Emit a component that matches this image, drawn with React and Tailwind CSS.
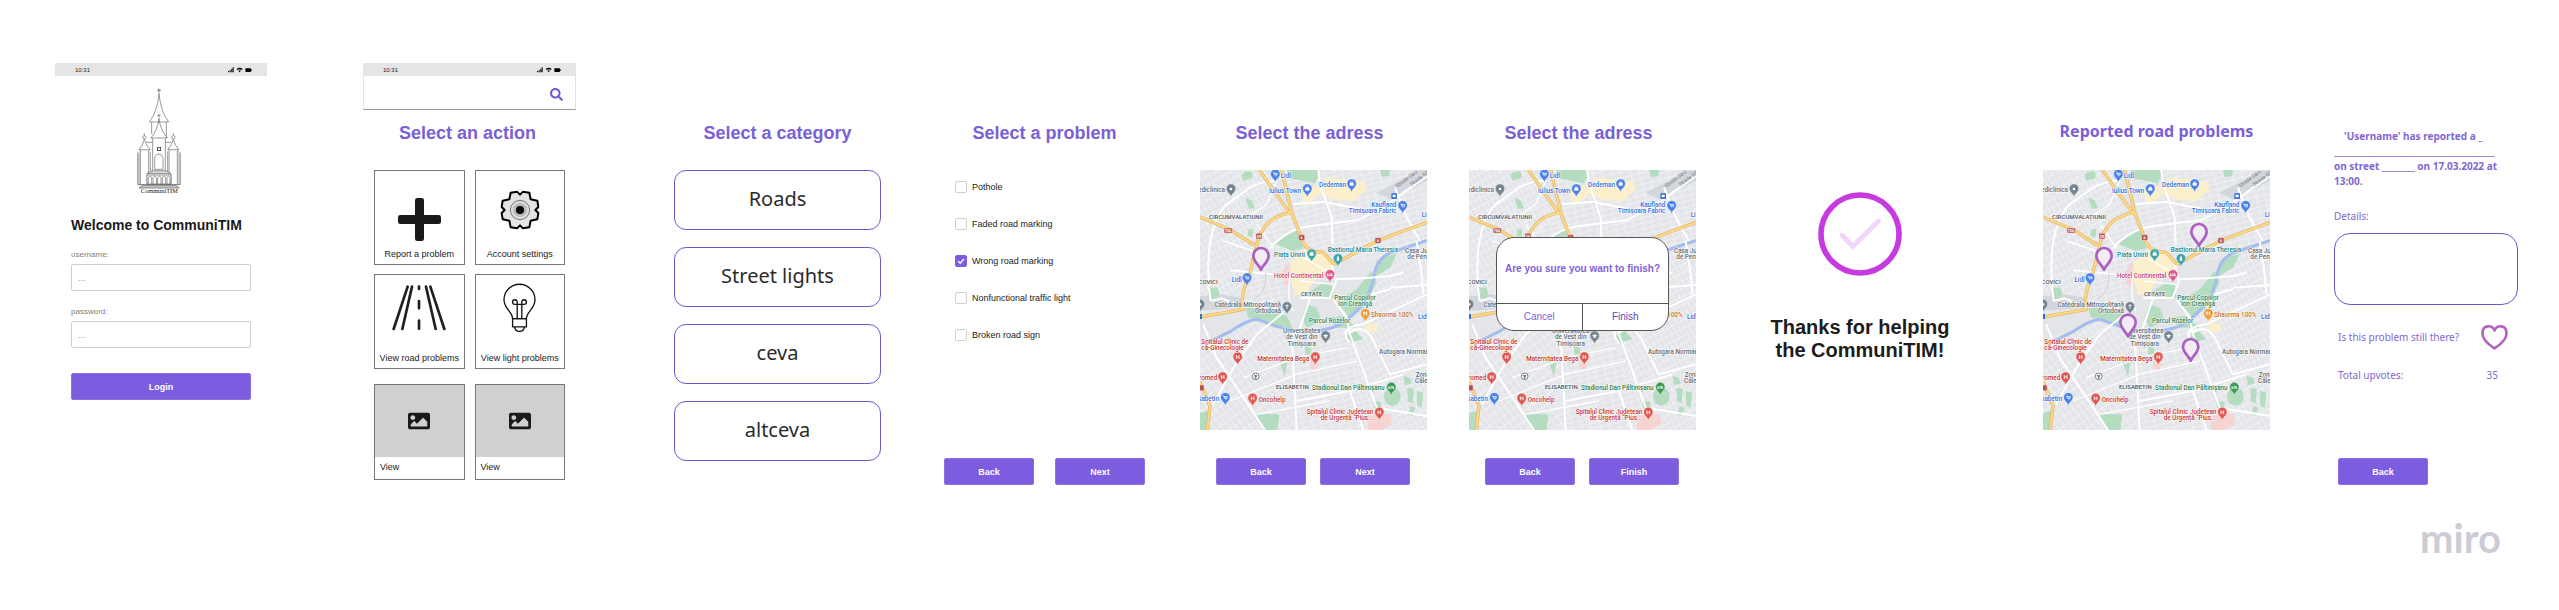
import React from "react";
import { FaSearch, FaImage } from "react-icons/fa";

const PIN_COLORS = {
  blue: "#4a80ea",
  gray: "#74848f",
  teal: "#3aa5b0",
  pink: "#e0588c",
  red: "#e0564f",
  orange: "#f29a2e",
  green: "#3f9a58",
};

const TEXT_COLORS = {
  blue: "#2f6fe0",
  gray: "#5d6a74",
  teal: "#148391",
  pink: "#c73b72",
  red: "#c8322c",
  orange: "#c8701a",
  green: "#2e7d46",
  dark: "#4a4f55",
};

/* [text, x, y, colour, anchor] */
const LABELS = [
  ["Mediclinica", 105, 94, "gray", "end"],
  ["Lidl", 272, 51, "blue", "start"],
  ["Iulius Town", 333, 95, "blue", "end"],
  ["Dedeman", 468, 79, "blue", "end"],
  ["CIRCUMVALAȚIUNII", 57, 174, "dark", "start"],
  ["Kaufland", 619, 137, "blue", "end"],
  ["Timișoara Fabric", 619, 156, "blue", "end"],
  ["Lidl", 695, 168, "blue", "start"],
  ["Piața Unirii", 345, 289, "teal", "end"],
  ["Bastionul Maria Theresia", 413, 273, "teal", "start"],
  ["Casa Județ", 645, 276, "gray", "start"],
  ["de Pensii", 652, 294, "gray", "start"],
  ["Hotel Continental", 400, 352, "pink", "end"],
  ["Lidl", 155, 362, "blue", "end"],
  ["COVICI", 83, 369, "dark", "end"],
  ["CETATE", 365, 406, "dark", "middle"],
  ["Parcul Copiilor", 495, 416, "green", "middle"],
  ["Ion Creangă", 495, 434, "green", "middle"],
  ["Catedrala Mitropolitană", 273, 439, "gray", "end"],
  ["Ortodoxă", 273, 457, "gray", "end"],
  ["Parcul Rozelor", 419, 485, "green", "middle"],
  ["Shaorma 100%", 543, 469, "orange", "start"],
  ["Lidl", 684, 473, "blue", "start"],
  ["Universitatea", 335, 516, "gray", "middle"],
  ["de Vest din", 335, 535, "gray", "middle"],
  ["Timișoara", 335, 554, "gray", "middle"],
  ["Spitalul Clinic de", 34, 550, "red", "start"],
  ["că-Ginecologie", 34, 568, "red", "start"],
  ["Maternitatea Bega", 358, 600, "red", "end"],
  ["Autogara Normandia", 567, 580, "gray", "start"],
  ["Promed", 82, 658, "red", "end"],
  ["Zona", 677, 649, "gray", "start"],
  ["Călea", 675, 667, "gray", "start"],
  ["ELISABETIN", 307, 685, "dark", "middle"],
  ["Stadionul Dan Păltinișanu", 584, 687, "green", "end"],
  ["Elisabetin", 87, 720, "blue", "end"],
  ["Oncohelp", 206, 723, "red", "start"],
  ["Spitalul Clinic Județean", 550, 758, "red", "end"],
  ["de Urgență “Pius...", 550, 776, "red", "end"],
];

/* [x, y, colour, glyph] */
const PINS = [
  [123, 84, "gray", "dot"],
  [256, 40, "blue", "cart"],
  [352, 84, "blue", "bag"],
  [485, 69, "blue", "bag"],
  [638, 134, "blue", "cart"],
  [365, 279, "teal", "bag"],
  [444, 293, "teal", "tower"],
  [420, 341, "pink", "bed"],
  [171, 351, "blue", "cart"],
  [291, 437, "gray", "cross"],
  [526, 458, "orange", "fork"],
  [30, 430, "gray", "dot"],
  [407, 525, "gray", "cap"],
  [143, 588, "red", "H"],
  [376, 588, "red", "H"],
  [98, 648, "red", "H"],
  [604, 679, "green", "bed"],
  [106, 710, "blue", "cart"],
  [188, 712, "red", "H"],
  [568, 754, "red", "H"],
];

function Glyph({ kind }) {
  const line = { fill: "none", stroke: "#fff", strokeWidth: 2.5 };
  switch (kind) {
    case "H":
      return <path d="M-4-6V6M4-6V6M-4 0H4" {...line} />;
    case "cart":
      return <path d="M-7-5H-4L-2 2H5L6-3H-3M-1 5H0M4 5H5" {...line} />;
    case "bag":
      return (
        <g>
          <rect x="-6" y="-3" width="12" height="8" fill="#fff" />
          <path d="M-3-3V-6H3V-3" {...line} />
        </g>
      );
    case "tower":
      return <path d="M-2-7H2L4 6H-4Z" fill="#fff" />;
    case "bed":
      return <path d="M-7-4V5M-7 2H7V5M-2-2H6V2" {...line} />;
    case "cross":
      return <path d="M0-7V7M-5-3H5" {...line} />;
    case "fork":
      return <path d="M-4-6V6M-6-6V-1H-2V-6M4 6V-6Q1-3 2 1H4" {...line} />;
    case "cap":
      return <path d="M-8-1L0-5L8-1L0 3ZM-4 2V5H4V2" fill="#fff" />;
    default:
      return <circle r="4" fill="#fff" />;
  }
}

function CityMap({ markers = [], id }) {
  const a = `${id}-streets-a`;
  const b = `${id}-streets-b`;
  const c = `${id}-streets-c`;
  return (
    <svg viewBox="30 27 681 780" className="block w-full" role="img" aria-label="Map of Timișoara">
      <defs>
        <pattern id={a} width="30" height="21" patternUnits="userSpaceOnUse" patternTransform="rotate(-28)">
          <path d="M0 2H30M3 0V21M18 2V21" stroke="#f7f8f9" strokeWidth="2" fill="none" />
        </pattern>
        <pattern id={b} width="27" height="33" patternUnits="userSpaceOnUse" patternTransform="rotate(-14)">
          <path d="M0 2H27M3 0V33M3 18H27" stroke="#f7f8f9" strokeWidth="2" fill="none" />
        </pattern>
        <pattern id={c} width="36" height="24" patternUnits="userSpaceOnUse" patternTransform="rotate(-36)">
          <path d="M0 2H36M3 0V24M21 2V24" stroke="#f7f8f9" strokeWidth="2" fill="none" />
        </pattern>
      </defs>
      <rect x="30" y="27" width="681" height="780" fill="#e3e5e9" />
      <path d="M30 27H230L300 158L200 250L160 445L30 470Z" fill={`url(#${a})`} />
      <path d="M300 158L275 27H711V240L560 300L430 300L340 250Z" fill={`url(#${b})`} />
      <path d="M230 190L300 160L345 250L300 340L280 440L160 440Z" fill={`url(#${b})`} />
      <path d="M30 540L190 480L300 520L310 807H30Z" fill={`url(#${c})`} />
      <path d="M310 520L470 500L560 807H310Z" fill={`url(#${b})`} />
      <path d="M470 510L575 300L711 250V807H560Z" fill={`url(#${a})`} />

      <g fill="#d3d6dc">
        <path d="M560 95L690 27H711V60L600 115Z" />
        <path d="M30 405L95 400L160 412L158 440L30 450Z" />
      </g>
      <g fill="#fbf0cb">
        <path d="M330 85L400 70L412 50L525 62L530 85L490 120L440 118L390 100L345 135Z" />
        <path d="M305 300L350 260L400 280L435 310L425 340L370 360L355 390L315 405L300 350Z" />
        <path d="M525 485L565 490L560 510L530 515Z" />
      </g>
      <g fill="#b4dcbf">
        <path d="M290 27H383V50L375 67L300 52Z" />
        <path d="M155 40Q170 25 187 35L188 50L160 60Z" />
        <path d="M570 27H600L598 45L575 48Z" />
        <path d="M165 110L185 118L195 140L178 145ZM175 205L190 205L188 227L172 225Z" />
        <path d="M255 250L300 212L328 207L340 262L310 270Z" />
        <circle cx="71" cy="396" r="16" />
        <path d="M58 380H84V412H58Z" />
        <path d="M345 400L400 365L425 370L430 410L380 415Z" />
        <path d="M440 420L500 385L545 330L560 365L520 440L480 470L455 440Z" />
        <path d="M560 300L590 285L620 280L600 320L560 345L548 375Z" />
        <path d="M165 440L250 445L290 465L310 505L265 500L215 475L175 470Z" />
        <path d="M350 430L380 440L395 480L350 500L335 470Z" />
        <path d="M410 470L460 465L500 500L440 500Z" />
        <path d="M470 525L495 508L520 535L480 545Z" />
        <path d="M265 595L292 605L285 645Z" />
        <path d="M345 555L365 562L360 590L345 585Z" />
        <ellipse cx="607" cy="706" rx="25" ry="28" />
        <path d="M640 645L660 650L665 668L645 672ZM652 680L672 684L668 726L654 722ZM680 690L700 695L695 740L682 735ZM662 735L676 740L668 765L655 760Z" />
        <path d="M30 755L55 750L48 807H30ZM198 760H268L262 807H225Z" />
        <path d="M550 720L575 722L572 745L552 742Z" />
      </g>
      <g fill="#f6d4d2">
        <path d="M530 765L600 758L608 790L570 807H535Z" />
        <path d="M360 600L385 610L380 630L362 622Z" />
        <path d="M278 330L298 300L300 380L280 370Z" />
      </g>

      <path
        d="M66 538L120 512Q180 472 205 476L262 497L330 512Q410 512 450 490Q500 458 530 412Q550 370 553 335Q565 290 600 276L711 238"
        fill="none"
        stroke="#a4bdee"
        strokeWidth="9"
      />

      <g fill="none" stroke="#fff" strokeWidth="6">
        <path d="M62 420Q50 350 58 260Q70 170 110 130L180 80Q230 55 262 60" />
        <path d="M62 420L95 412L160 440" />
        <path d="M385 27Q390 80 405 110L425 170L428 250" />
        <path d="M240 262Q290 205 360 195L500 178Q570 150 640 95L711 45" />
        <path d="M310 130L400 122L540 150" />
        <path d="M615 80L650 170L690 240" />
        <path d="M120 328L200 335L300 345" />
        <path d="M436 355L520 352L600 345L640 335" />
        <path d="M425 310L438 360L420 410L330 412" />
        <path d="M430 415L470 470L480 520L560 740" />
        <path d="M360 412L330 500L305 530L320 807" />
        <path d="M40 490L80 590L130 665L225 807" />
        <path d="M280 455L200 520L130 620L70 730" />
        <path d="M480 545Q440 500 520 490L711 400" />
        <path d="M480 515Q530 480 560 560L600 640L711 610" />
        <path d="M320 720L480 690L640 640" />
        <path d="M560 740L711 765M480 690L520 807" />
        <path d="M600 380L711 372M545 400L600 385" />
        <path d="M680 240L695 340L700 400" />
      </g>
      <g fill="none" stroke="#fff" strokeWidth="4">
        <path d="M200 190L250 260M260 60L230 130L170 170M100 240L190 270" />
        <path d="M300 345Q290 420 310 450M340 290L430 340M330 360L430 370" />
        <path d="M160 650L320 590L470 560M120 720L320 640L500 600M200 760L420 720" />
      </g>
      <path d="M228 335Q230 400 190 415" fill="none" stroke="#cfd2d8" strokeWidth="3" />

      <g fill="none" strokeLinejoin="round">
        <g stroke="#e5b45c" strokeWidth="10">
          <path d="M30 168L120 206L193 252" />
          <path d="M208 27L300 158M275 27L306 158L340 245Q352 272 400 275L432 310" />
          <path d="M306 155Q225 165 203 240L180 335Q148 410 160 445L30 468" />
          <path d="M432 310L560 240L711 184" />
          <path d="M30 662L60 735L52 807" />
        </g>
        <g stroke="#fbd98b" strokeWidth="6">
          <path d="M30 168L120 206L193 252" />
          <path d="M208 27L300 158M275 27L306 158L340 245Q352 272 400 275L432 310" />
          <path d="M306 155Q225 165 203 240L180 335Q148 410 160 445L30 468" />
          <path d="M432 310L560 240L711 184" />
          <path d="M30 662L60 735L52 807" />
        </g>
      </g>

      <g fill="#b9524e" stroke="#f3d9cf" strokeWidth="1.5">
        <rect x="102" y="201" width="25" height="15" rx="3" />
        <rect x="198" y="217" width="18" height="17" rx="3" />
        <rect x="326" y="221" width="18" height="17" rx="3" />
        <rect x="555" y="230" width="18" height="17" rx="3" />
        <rect x="24" y="672" width="18" height="17" rx="3" />
      </g>
      <g className="font-['Roboto',sans-serif]" fontSize="11" fontWeight="700" fill="#fff" textAnchor="middle">
        <text x="114" y="213">70A</text>
        <text x="207" y="230">59</text>
        <text x="335" y="234">6</text>
        <text x="564" y="243">6</text>
      </g>
      <rect x="604" y="97" width="17" height="17" rx="2" fill="#2f6fd6" />
      <rect x="608" y="101" width="9" height="8" rx="2" fill="#fff" />
      <rect x="22" y="459" width="14" height="15" fill="#2f6fd6" />

      <g className="font-['Roboto',sans-serif]" fontSize="15" fill="#6c7278">
        <text transform="translate(622 80) rotate(-36)">Strada Gării</text>
        <text transform="translate(664 76) rotate(-36)">Strada Gării</text>
      </g>

      <circle cx="197" cy="646" r="10" fill="#fff" stroke="#777d83" strokeWidth="3" />
      <path d="M192 642H202L197 656Z" fill="#777d83" />

      {PINS.map(([x, y, color, glyph]) => (
        <g key={`${x}-${y}`} transform={`translate(${x} ${y})`}>
          <path
            d="M0 24C-2 14-14 9-14-1A14 14 0 1 1 14-1C14 9 2 14 0 24Z"
            fill={PIN_COLORS[color]}
            stroke="#fff"
            strokeWidth="1"
          />
          <Glyph kind={glyph} />
        </g>
      ))}

      <g
        className="font-['Roboto',sans-serif]"
        fontWeight="500"
        stroke="#fff"
        strokeWidth="3"
        strokeLinejoin="round"
        paintOrder="stroke"
      >
        {LABELS.map(([text, x, y, color, anchor]) => (
          <text
            key={`${text}-${x}-${y}`}
            x={x}
            y={y}
            fill={TEXT_COLORS[color]}
            textAnchor={anchor}
            fontSize={color === "dark" ? 18 : 19}
          >
            {text}
          </text>
        ))}
      </g>

      {markers.map(([x, y]) => (
        <path
          key={`${x}-${y}`}
          transform={`translate(${x} ${y})`}
          d="M0 41C-6 26-23 17-23-1A23 23 0 1 1 23-1C23 17 6 26 0 41Z"
          fill="#f1ecf5"
          stroke="#ab5fc0"
          strokeWidth="8"
          strokeLinejoin="round"
        />
      ))}
    </svg>
  );
}

function StatusBar() {
  return (
    <div className="flex h-[13px] items-center justify-between bg-[#e5e5e5] pr-[15px] pl-5">
      <span className="text-[6px] leading-[8px] text-[#222]">10:31</span>
      <svg viewBox="0 0 72 18" className="h-[6px] w-6" aria-hidden="true">
        <path d="M0 16V12H3V16ZM5 16V9H8V16ZM10 16V5H13V16ZM14 16V1H17V16Z" fill="#000" />
        <path d="M26 6Q35-1 44 6L41 9Q35 5 29 9ZM31 11Q35 8 39 11L35 16Z" fill="#000" />
        <rect x="52" y="4" width="17" height="11" rx="2" fill="#000" />
        <rect x="70" y="7" width="2" height="5" fill="#000" />
      </svg>
    </div>
  );
}

function CathedralLogo() {
  return (
    <svg
      viewBox="255 87 138 321"
      className="mx-auto h-[107px] w-[46px]"
      fill="none"
      stroke="#666"
      strokeWidth="2"
      role="img"
      aria-label="CommuniTIM"
    >
      <path d="M324 90V108M318 95H330M320 91H328" />
      <path d="M324 106Q318 160 295 189H353Q330 160 324 106Z" />
      <path d="M302 190V225M346 190V236" />
      <path d="M324 165V182M319 169H329" />
      <path d="M324 180Q319 215 300 237H349Q329 215 324 180Z" />
      <path d="M305 238V340M343 238V340" />
      <rect x="319" y="265" width="10" height="10" stroke="#222" />
      <path d="M311 331V298Q311 287 324 285Q336 287 336 298V331Z" />
      <path d="M280 223V230M367 223V230" />
      <circle cx="280" cy="235" r="5" />
      <circle cx="367" cy="235" r="5" />
      <path d="M280 241Q276 260 264 272H298Q285 260 280 241ZM367 241Q362 260 350 272H384Q371 260 367 241Z" />
      <path d="M286 250H304M344 250H361" />
      <path d="M268 273V376M293 273V344M354 273V344M379 273V376" />
      <path d="M260 376V283L266 278M264 376V284M388 376V283L381 278M384 376V284M298 278V340M350 278V340" />
      <path d="M288 344L304 335H345L360 344ZM288 344V375M360 344V375" fill="#d5d5d5" />
      <path d="M288 348H360V375H288Z" fill="#fff" />
      <path d="M292 375V356Q297 346 302 356V375M306 375V356Q311 346 316 356V375M320 375V356Q325 346 330 356V375M334 375V356Q339 346 344 356V375M348 375V356Q353 346 357 356V375" />
      <path d="M260 377H388" stroke="#333" />
      <path d="M274 379H374L385 387H264Z" fill="#c4c4c4" />
      <text
        x="325"
        y="403"
        textAnchor="middle"
        fontSize="19"
        fill="#111"
        stroke="none"
        className="font-['Liberation_Serif',serif]"
      >
        CommuniTIM
      </text>
    </svg>
  );
}

function GearIcon() {
  return (
    <svg viewBox="0 0 120 120" className="size-10" aria-hidden="true">
      <path
        d="M60 14L69 5L88 8L92 28L112 32L115 51L106 60L115 69L112 88L92 92L88 112L69 115L60 106L51 115L32 112L28 92L8 88L5 69L14 60L5 51L8 32L28 28L32 8L51 5Z"
        fill="#e4e4e4"
        stroke="#000"
        strokeWidth="6"
        strokeLinejoin="round"
      />
      <circle cx="60" cy="60" r="29" fill="#dcdcdc" stroke="#777" strokeWidth="3" />
      <circle cx="60" cy="60" r="21" fill="#b9b9b9" />
      <circle cx="60" cy="60" r="12" fill="#000" />
    </svg>
  );
}

function PlusIcon() {
  return (
    <svg viewBox="0 0 129 129" className="size-[43px]" aria-hidden="true">
      <rect x="51" y="0" width="27" height="129" rx="7" fill="#1a1a1a" />
      <rect x="0" y="51" width="129" height="27" rx="7" fill="#1a1a1a" />
    </svg>
  );
}

function RoadIcon() {
  return (
    <svg
      viewBox="0 0 162 138"
      className="h-[46px] w-[54px]"
      stroke="#1f1f1f"
      strokeWidth="8"
      strokeLinecap="round"
      aria-hidden="true"
    >
      <path d="M47 5L5 132M60 5L31 132M102 5L131 132M115 5L157 132" />
      <path d="M81 5V12M81 48V70M81 107V131" />
    </svg>
  );
}

function BulbIcon() {
  return (
    <svg
      viewBox="0 0 100 150"
      className="h-[50px] w-[33px]"
      fill="none"
      stroke="#111"
      strokeWidth="4"
      strokeLinejoin="round"
      aria-hidden="true"
    >
      <path d="M29 107C29 86 3 78 3 50A47 47 0 0 1 97 50C97 78 71 86 71 107Z" />
      <path d="M29 107H71V132H29ZM35 132Q37 146 50 146Q63 146 65 132" />
      <path d="M43 107V64M57 107V64M43 64H57" />
      <path d="M43 64H36A7 7 0 1 1 43 57ZM57 64H64A7 7 0 1 0 57 57Z" />
    </svg>
  );
}

function Title({ children, className = "" }) {
  return (
    <h2 className={`text-center text-[18px] leading-6 font-bold whitespace-nowrap text-[#7a60d6] ${className}`}>
      {children}
    </h2>
  );
}

function PrimaryButton({ children, className = "w-[90px]" }) {
  return (
    <button
      type="button"
      className={`h-[27px] rounded-[2px] border border-[#8b70e4] bg-[#7c5cdf] text-[9px] leading-3 font-bold text-white ${className}`}
    >
      {children}
    </button>
  );
}

function Field({ id, label, type }) {
  return (
    <div>
      <label htmlFor={id} className="mb-[3px] block text-[8px] leading-3 text-[#808080]">
        {label}
      </label>
      <input
        id={id}
        type={type}
        placeholder="..."
        className="block h-[27px] w-full rounded-[2px] border border-[#cfcfcf] bg-white px-[6px] text-[9px] placeholder:text-[#999]"
      />
    </div>
  );
}

function LoginScreen() {
  return (
    <section className="w-[212px]">
      <StatusBar />
      <div className="px-4 pt-3">
        <div className="pr-1">
          <CathedralLogo />
        </div>
        <h1 className="mt-5 text-[14px] leading-5 font-bold whitespace-nowrap text-[#1a1a1a]">
          Welcome to CommuniTIM
        </h1>
        <form className="mt-[14px]">
          <div className="flex flex-col gap-[15px]">
            <Field id="username" label="username:" type="text" />
            <Field id="password" label="password:" type="password" />
          </div>
          <PrimaryButton className="mt-[25px] w-full">Login</PrimaryButton>
        </form>
      </div>
    </section>
  );
}

function ActionCard({ label, children }) {
  return (
    <button
      type="button"
      className="flex h-[95px] flex-col items-center border border-[#777] bg-white pb-1 text-[9px] leading-3 whitespace-nowrap text-[#1a1a1a]"
    >
      <span className="flex flex-1 items-center">{children}</span>
      <span>{label}</span>
    </button>
  );
}

function ImageCard() {
  return (
    <button
      type="button"
      className="flex h-24 flex-col border border-[#777] bg-white text-left text-[9px] leading-3 text-[#1a1a1a]"
    >
      <span className="flex h-[72px] w-full items-center justify-center bg-[#d0d0d0]">
        <FaImage className="size-[22px] text-[#1a1a1a]" />
      </span>
      <span className="px-[5px] pt-1">View</span>
    </button>
  );
}

function ActionScreen() {
  return (
    <section className="w-[213px]">
      <StatusBar />
      <div className="flex h-[34px] items-center justify-end border-x border-b border-x-[#e2e2e2] border-b-[#999] pr-3">
        <button type="button" aria-label="Search" className="pt-1">
          <FaSearch className="size-[13px] text-[#7659d2]" />
        </button>
      </div>
      <Title className="mt-[11px] pr-1">Select an action</Title>
      <div className="mt-[25px] px-[11px]">
        <div className="grid grid-cols-2 gap-x-[10px] gap-y-[9px]">
          <ActionCard label="Report a problem">
            <span className="pt-5">
              <PlusIcon />
            </span>
          </ActionCard>
          <ActionCard label="Account settings">
            <GearIcon />
          </ActionCard>
          <ActionCard label="View road problems">
            <span className="pb-3">
              <RoadIcon />
            </span>
          </ActionCard>
          <ActionCard label="View light problems">
            <span className="pb-3">
              <BulbIcon />
            </span>
          </ActionCard>
        </div>
        <div className="mt-[15px] grid grid-cols-2 gap-[10px]">
          <ImageCard />
          <ImageCard />
        </div>
      </div>
    </section>
  );
}

function CategoryScreen() {
  return (
    <section className="w-[207px] pt-[58px]">
      <Title>Select a category</Title>
      <div className="mt-[25px] flex flex-col gap-[17px]">
        {["Roads", "Street lights", "ceva", "altceva"].map((name) => (
          <button
            key={name}
            type="button"
            className="h-[60px] rounded-xl border border-[#7058cc] bg-white pb-[2px] font-['Noto_Sans',sans-serif] text-[20px] leading-6 text-[#2b2b2b]"
          >
            {name}
          </button>
        ))}
      </div>
    </section>
  );
}

const PROBLEMS = [
  ["Pothole", false],
  ["Faded road marking", false],
  ["Wrong road marking", true],
  ["Nonfunctional traffic light", false],
  ["Broken road sign", false],
];

function ProblemScreen() {
  return (
    <section className="w-[201px] pt-[58px]">
      <Title>Select a problem</Title>
      <div className="mt-[25px] flex h-[260px] flex-col gap-[25px] pt-[11px] pl-[11px]">
        {PROBLEMS.map(([name, checked]) => (
          <label key={name} className="flex items-center gap-[5px] text-[9px] leading-3 text-[#222]">
            <span className="grid size-3">
              <input
                type="checkbox"
                defaultChecked={checked}
                className="peer col-start-1 row-start-1 size-3 appearance-none rounded-[2px] border border-[#cfcfcf] bg-white checked:border-[#7c5cdf] checked:bg-[#7c5cdf]"
              />
              <svg
                viewBox="0 0 12 12"
                className="pointer-events-none col-start-1 row-start-1 hidden size-3 peer-checked:block"
                fill="none"
                stroke="#fff"
                strokeWidth="1.3"
                aria-hidden="true"
              >
                <path d="M3 6L5.2 8.2L9 4" />
              </svg>
            </span>
            {name}
          </label>
        ))}
      </div>
      <div className="mt-7 flex justify-between">
        <PrimaryButton>Back</PrimaryButton>
        <PrimaryButton>Next</PrimaryButton>
      </div>
    </section>
  );
}

function AddressScreen({ id, action, markers, children }) {
  return (
    <section className="w-[227px] pt-[58px]">
      <Title className="pr-2">Select the adress</Title>
      <div className="relative mt-[25px]">
        <CityMap id={id} markers={markers} />
        {children}
      </div>
      <div className="mt-7 flex gap-[14px] pl-4">
        <PrimaryButton>Back</PrimaryButton>
        <PrimaryButton>{action}</PrimaryButton>
      </div>
    </section>
  );
}

function ConfirmDialog() {
  return (
    <div
      role="dialog"
      aria-label="Confirm"
      className="absolute inset-x-[27px] top-[67px] overflow-hidden rounded-[18px] border border-[#555] bg-white"
    >
      <p className="flex h-[65px] items-center justify-center pb-1 text-[10px] leading-4 font-bold whitespace-nowrap text-[#8161d6]">
        Are you sure you want to finish?
      </p>
      <div className="grid grid-cols-2 divide-x divide-[#555] border-t border-[#555] text-[10px] leading-4">
        <button type="button" className="h-[26px] text-[#8161d6]">
          Cancel
        </button>
        <button type="button" className="h-[26px] text-[#5a48b8]">
          Finish
        </button>
      </div>
    </div>
  );
}

function ThanksScreen() {
  return (
    <section className="w-[180px] pt-[129px]">
      <svg viewBox="0 0 254 254" className="mx-auto size-[84px]" fill="none" aria-hidden="true">
        <circle cx="127" cy="127" r="118" stroke="#c63adf" strokeWidth="17" />
        <path
          d="M73 131L105 165L183 88"
          stroke="#f1d6fa"
          strokeWidth="15"
          strokeLinecap="round"
          strokeLinejoin="miter"
        />
      </svg>
      <p className="mt-10 text-center text-[20px] leading-[23px] font-bold whitespace-nowrap text-[#1c1c1c]">
        Thanks for helping
        <br />
        the CommuniTIM!
      </p>
    </section>
  );
}

function ReportedScreen() {
  return (
    <section className="w-[227px] pt-[56px]">
      <h2 className="text-center font-['Noto_Sans',sans-serif] text-[16px] leading-6 font-bold whitespace-nowrap text-[#7a60d6]">
        Reported road problems
      </h2>
      <div className="mt-[27px]">
        <CityMap
          id="reported"
          markers={[
            [213, 285],
            [498, 213],
            [285, 485],
            [473, 558],
          ]}
        />
      </div>
    </section>
  );
}

function ReportScreen() {
  return (
    <section className="w-[184px] pt-[66px] font-['Noto_Sans',sans-serif] text-[10px] leading-[15px] text-[#8068d2]">
      <p className="font-bold whitespace-nowrap">
        <span className="block pl-[10px]">'Username' has reported a _</span>
        <span className="block">_______________________________________</span>
        <span className="block">on street ________ on 17.03.2022 at</span>
        <span className="block">13:00.</span>
      </p>
      <label htmlFor="details" className="mt-5 block">
        Details:
      </label>
      <textarea
        id="details"
        className="mt-[9px] block h-[72px] w-full resize-none rounded-2xl border border-[#7058cc] bg-white p-2"
      />
      <div className="mt-[19px] flex items-center justify-between pr-[10px] pl-1">
        <span>Is this problem still there?</span>
        <button type="button" aria-label="Upvote">
          <svg viewBox="0 0 82 80" className="block h-[26px] w-[27px]" fill="none" aria-hidden="true">
            <path
              d="M41 20C34 3 4 0 4 29C4 49 24 64 41 75C58 64 78 49 78 29C78 0 48 3 41 20Z"
              stroke="#b063bd"
              strokeWidth="8"
              strokeLinejoin="round"
            />
          </svg>
        </button>
      </div>
      <div className="mt-[18px] flex justify-between pr-5 pl-1">
        <span>Total upvotes:</span>
        <span>35</span>
      </div>
      <div className="mt-[75px] pl-1 font-['Liberation_Sans',sans-serif]">
        <PrimaryButton>Back</PrimaryButton>
      </div>
      <p className="mt-7 pr-[17px] text-right font-['Lato',sans-serif] text-[40px] leading-[50px] font-bold text-[#cdccd6]">
        miro
      </p>
    </section>
  );
}

export default function App() {
  return (
    <main className="grid min-h-screen grid-cols-[308fr_311fr_270fr_256fr_269fr_301fr_273fr_291fr_225fr] items-start bg-white pt-[63px] pl-[55px] font-['Liberation_Sans',Arial,sans-serif]">
      <LoginScreen />
      <ActionScreen />
      <CategoryScreen />
      <ProblemScreen />
      <AddressScreen id="address" action="Next" markers={[[213, 285]]} />
      <AddressScreen id="confirm" action="Finish">
        <ConfirmDialog />
      </AddressScreen>
      <ThanksScreen />
      <ReportedScreen />
      <ReportScreen />
    </main>
  );
}
